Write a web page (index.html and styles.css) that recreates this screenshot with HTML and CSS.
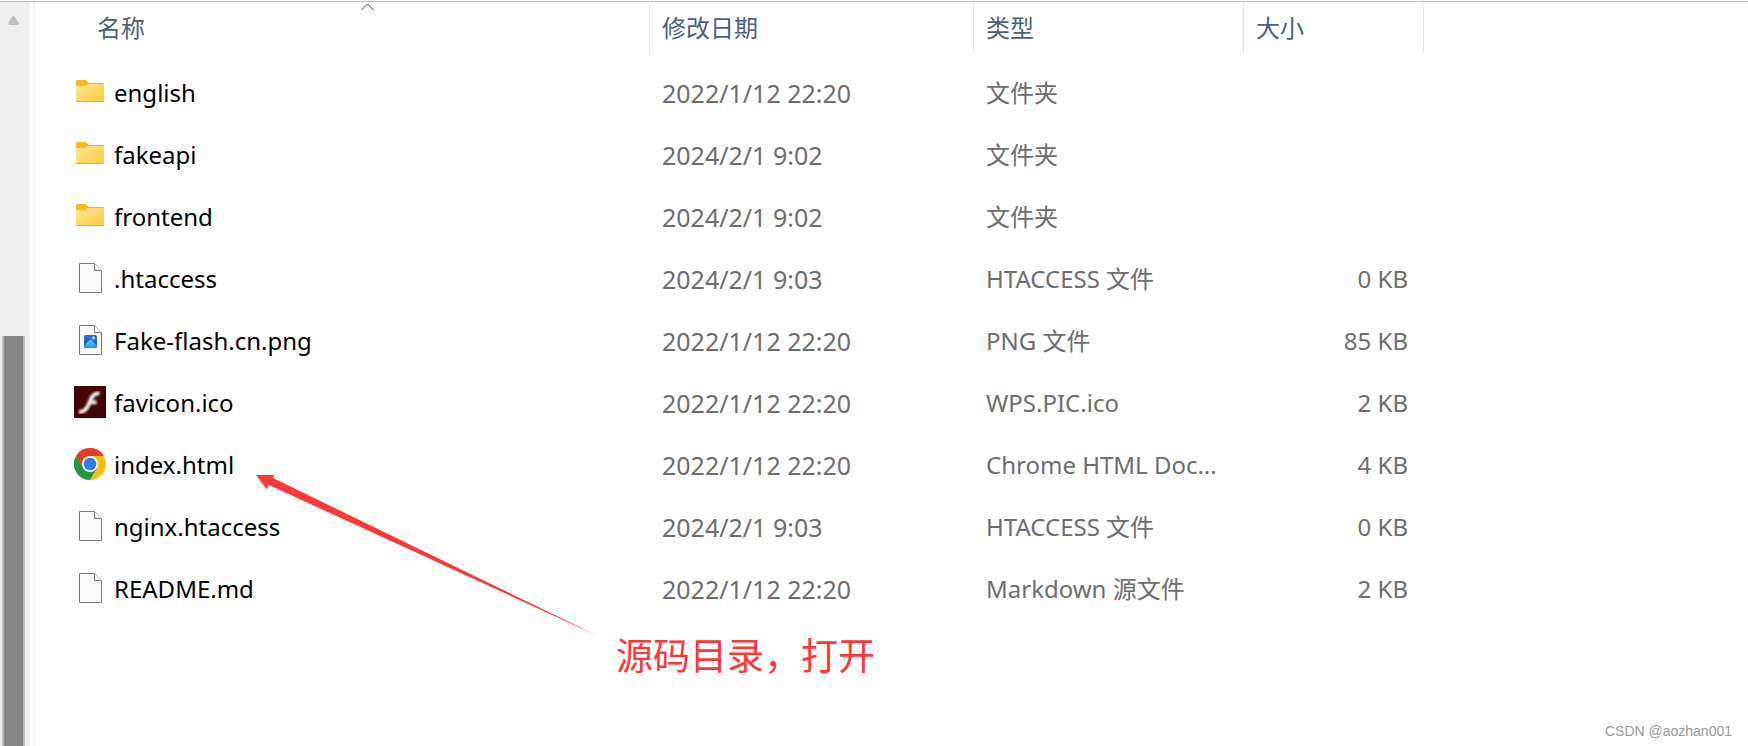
FILE: index.html
```html
<!DOCTYPE html>
<html lang="zh-CN">
<head>
    <meta charset="UTF-8">
    <title>文件列表</title>
    <link rel="stylesheet" href="styles.css">
</head>
<body>

<!-- 公用图标 -->
<svg class="defs" width="0" height="0">
    <defs>
        <linearGradient id="g-folder" x1="0" y1="0" x2="1" y2="1">
            <stop offset="0" stop-color="#ffe8a0"/>
            <stop offset="1" stop-color="#ffc937"/>
        </linearGradient>
        <linearGradient id="g-pic" x1="0" y1="0" x2="0" y2="1">
            <stop offset="0" stop-color="#2f6fd0"/>
            <stop offset="1" stop-color="#1a57c4"/>
        </linearGradient>
        <linearGradient id="g-hill" x1="0" y1="0" x2="0" y2="1">
            <stop offset="0" stop-color="#5fe0ff"/>
            <stop offset="1" stop-color="#1b8fe8"/>
        </linearGradient>
        <filter id="soft"><feGaussianBlur stdDeviation="0.8"/></filter>
    </defs>
    <symbol id="folder" viewBox="0 0 32 32">
        <path d="M2 10V5.500Q2 4 3.500 4H11Q12.300 4 13 5L14.500 7V10Z" fill="#fbb917"/>
        <path d="M2 10H11Q12.300 10 13 9L14.500 7H28.500Q30 7 30 8.500V24.500Q30 26 28.500 26H3.500Q2 26 2 24.500Z" fill="url(#g-folder)"/>
        <path d="M14 7.500H29.500M2.500 25.500H29.500" stroke="#eeb02c" fill="none"/>
    </symbol>
    <symbol id="file" viewBox="0 0 32 32">
        <path d="M5.500 1.500H20.500L27.500 8.500V30.500H5.500Z" fill="#fafafa" stroke="#7a7a7a"/>
        <path d="M20.500 1.500V8.500H27.500" fill="#fff" stroke="#7a7a7a"/>
    </symbol>
</svg>

<div id="root">
    <div class="scrollbar">
        <svg class="up" viewBox="0 0 11 9"><path d="M4 1Q5.500-.8 7 1L10.600 6.800Q11.300 9 9.500 9H1.500Q-.3 9 .4 6.800Z"/></svg>
        <div class="thumb"></div>
    </div>

    <div class="list">
        <table>
            <colgroup>
                <col class="col-name">
                <col class="col-date">
                <col class="col-type">
                <col class="col-size">
                <col>
            </colgroup>
            <thead>
                <tr>
                    <th class="name"><button type="button">名称<svg class="sort" viewBox="0 0 13 8"><path d="M.5 7L6.500 1L12.500 7"/></svg></button></th>
                    <th><button type="button">修改日期</button></th>
                    <th><button type="button">类型</button></th>
                    <th><button type="button">大小</button></th>
                    <th></th>
                </tr>
            </thead>
            <tbody>
                <tr>
                    <td class="name"><div><svg class="icon"><use href="#folder"/></svg>english</div></td>
                    <td>2022/1/12 22:20</td>
                    <td class="type">文件夹</td>
                    <td class="size"></td>
                    <td></td>
                </tr>
                <tr>
                    <td class="name"><div><svg class="icon"><use href="#folder"/></svg>fakeapi</div></td>
                    <td>2024/2/1 9:02</td>
                    <td class="type">文件夹</td>
                    <td class="size"></td>
                    <td></td>
                </tr>
                <tr>
                    <td class="name"><div><svg class="icon"><use href="#folder"/></svg>frontend</div></td>
                    <td>2024/2/1 9:02</td>
                    <td class="type">文件夹</td>
                    <td class="size"></td>
                    <td></td>
                </tr>
                <tr>
                    <td class="name"><div><svg class="icon"><use href="#file"/></svg>.htaccess</div></td>
                    <td>2024/2/1 9:03</td>
                    <td class="type">HTACCESS 文件</td>
                    <td class="size">0 KB</td>
                    <td></td>
                </tr>
                <tr>
                    <td class="name"><div><svg class="icon" viewBox="0 0 32 32">
                        <use href="#file"/>
                        <rect x="10" y="11" width="13" height="13" rx="1.500" fill="url(#g-pic)"/>
                        <path d="M10 22L15.500 16.200Q16.500 15.200 17.500 16.200L23 22V22.500Q23 24 21.500 24H11.500Q10 24 10 22.500Z" fill="url(#g-hill)"/>
                        <path d="M19.500 11.700L20.200 13.300L21.800 14L20.200 14.700L19.500 16.300L18.800 14.700L17.200 14L18.800 13.300Z" fill="#d8f4ff"/>
                    </svg>Fake-flash.cn.png</div></td>
                    <td>2022/1/12 22:20</td>
                    <td class="type">PNG 文件</td>
                    <td class="size">85 KB</td>
                    <td></td>
                </tr>
                <tr>
                    <td class="name"><div><svg class="icon" viewBox="0 0 32 32">
                        <rect width="32" height="32" fill="#460303"/>
                        <g fill="none" stroke="#f4eeee" stroke-width="4" filter="url(#soft)">
                            <path d="M25.500 7.200Q19.500 6.800 16.800 13.500L14.200 19.500Q11.300 26 5 26"/>
                            <path d="M15 16.300H22.500"/>
                        </g>
                    </svg>favicon.ico</div></td>
                    <td>2022/1/12 22:20</td>
                    <td class="type">WPS.PIC.ico</td>
                    <td class="size">2 KB</td>
                    <td></td>
                </tr>
                <tr>
                    <td class="name"><div><svg class="icon" viewBox="0 0 32 32">
                        <circle cx="16" cy="16" r="16" fill="#fcc010"/>
                        <path d="M16 8H29.860A16 16 0 0 0 2.140 8L9.070 20Z" fill="#e33b2e"/>
                        <path d="M2.140 8A16 16 0 0 0 16 32L22.930 20L16 16L9.070 20Z" fill="#21964a"/>
                        <circle cx="16" cy="16" r="8" fill="#fff"/>
                        <circle cx="16" cy="16" r="6.300" fill="#2f7de9"/>
                    </svg>index.html</div></td>
                    <td>2022/1/12 22:20</td>
                    <td class="type">Chrome HTML Doc...</td>
                    <td class="size">4 KB</td>
                    <td></td>
                </tr>
                <tr>
                    <td class="name"><div><svg class="icon"><use href="#file"/></svg>nginx.htaccess</div></td>
                    <td>2024/2/1 9:03</td>
                    <td class="type">HTACCESS 文件</td>
                    <td class="size">0 KB</td>
                    <td></td>
                </tr>
                <tr>
                    <td class="name"><div><svg class="icon"><use href="#file"/></svg>README.md</div></td>
                    <td>2022/1/12 22:20</td>
                    <td class="type">Markdown 源文件</td>
                    <td class="size">2 KB</td>
                    <td></td>
                </tr>
            </tbody>
        </table>
    </div>

    <!-- 红色标注 -->
    <svg class="arrow" viewBox="0 0 342 162">
        <path d="M0 0H18L17 3L342 161L13 10L10.500 14Z"/>
    </svg>
    <p class="note">源码目录，打开</p>
    <p class="mark">CSDN @aozhan001</p>
</div>

</body>
</html>
```
FILE: styles.css
```css
*{
    box-sizing: border-box;
}
body{
    margin: 0;
    background: #fff;
    font-family: "Noto Sans", "Noto Sans CJK SC", sans-serif;
    font-size: 24px;
    color: #6d6d6d;
}
.defs{
    position: absolute;
}
#root{
    position: relative;
    display: flex;
    min-height: 100vh;
    padding-top: 1px;
    overflow: hidden;
}
#root::before{
    content: "";
    position: absolute;
    top: 1px;
    left: 0;
    right: 0;
    height: 1px;
    background: #b9bdb9;
}

/* 左侧滚动条 */
.scrollbar{
    display: flex;
    flex-direction: column;
    width: 30px;
    padding: 15px 5px 0 2px;
    background: #efefef;
}
.up{
    width: 11px;
    height: 9px;
    margin: 0 6px;
    fill: #c0c0c0;
}
.thumb{
    flex: 1;
    margin-top: 311px;
    border: solid #bbb;
    border-width: 0 2px;
    background: #858585;
}

/* 文件列表 */
.list{
    flex: 1;
    margin-left: 3px;
    border-left: 2px solid #f5f5f5;
}
table{
    width: 100%;
    table-layout: fixed;
    border-collapse: collapse;
}
.col-name{
    width: 615px;
}
.col-date{
    width: 324px;
}
.col-type{
    width: 270px;
}
.col-size{
    width: 180px;
}
th{
    height: 61px;
    padding: 0;
    vertical-align: top;
    font-weight: normal;
}
th.name{
    padding-left: 50px;
}
th button{
    position: relative;
    display: block;
    width: 100%;
    height: 52px;
    padding: 0 12px 2px;
    border: 0;
    border-right: 1px solid #e5e5e5;
    background: none;
    font: inherit;
    color: #4c607a;
    text-align: left;
}
.sort{
    position: absolute;
    top: 2px;
    left: 50%;
    width: 13px;
    height: 8px;
    margin-left: -6px;
    fill: none;
    stroke: #444;
}
td{
    height: 62px;
    padding: 0 12px;
    font-size: 25px;
    line-height: 36px;
    white-space: nowrap;
}
td.name{
    padding-left: 39px;
    font-size: 24px;
    color: #000;
}
td.name div{
    display: flex;
    align-items: center;
}
td.type{
    font-size: 24px;
}
td.size{
    padding-right: 16px;
    font-size: 24px;
    text-align: right;
}
.icon{
    width: 32px;
    height: 32px;
    margin: 0 8px 2px 0;
}

/* 标注 */
.arrow{
    position: absolute;
    top: 475px;
    left: 256px;
    width: 342px;
    height: 162px;
    fill: #fb3838;
}
.note{
    position: absolute;
    top: 627px;
    left: 616px;
    margin: 0;
    font-family: "Noto Sans CJK SC", sans-serif;
    font-size: 37px;
    line-height: 54px;
    color: #fb3838;
}
.mark{
    position: absolute;
    right: 16px;
    bottom: 5px;
    margin: 0;
    font-family: "Liberation Sans", sans-serif;
    font-size: 14px;
    line-height: 20px;
    color: #999;
}
```
